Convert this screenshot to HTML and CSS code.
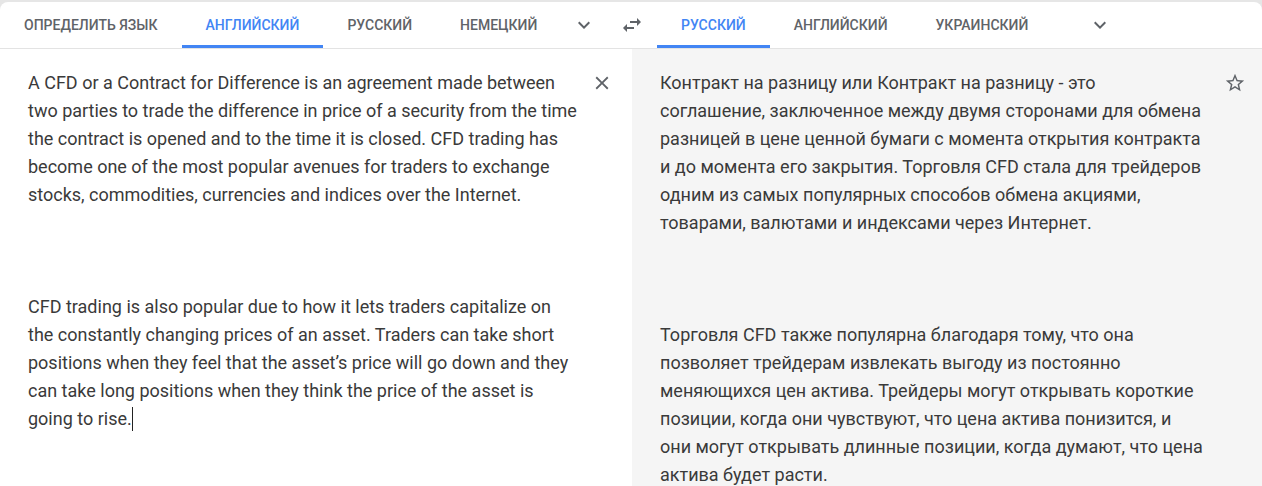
FILE: index.html
```html
<!DOCTYPE html>
<html lang="ru">
<head>
<meta charset="utf-8">
<title>Переводчик</title>
<link rel="stylesheet" href="styles.css">
</head>
<body>
<div class="card">
  <div class="header">
    <div class="side side-src">
      <div class="tab">Определить язык</div>
      <div class="tab active">Английский</div>
      <div class="tab">Русский</div>
      <div class="tab">Немецкий</div>
      <div class="icon-btn"><svg viewBox="0 0 24 24" width="24" height="24"><path d="M16.59 8.59L12 13.17 7.41 8.59 6 10l6 6 6-6z"/></svg></div>
    </div>
    <div class="icon-btn swap"><svg viewBox="0 0 24 24" width="24" height="24"><path d="M6.99 11L3 15l3.99 4v-3H14v-2H6.99v-3zM21 9l-3.99-4v3H10v2h7.01v3L21 9z"/></svg></div>
    <div class="side side-tgt">
      <div class="tab active">Русский</div>
      <div class="tab">Английский</div>
      <div class="tab">Украинский</div>
      <div class="icon-btn more"><svg viewBox="0 0 24 24" width="24" height="24"><path d="M16.59 8.59L12 13.17 7.41 8.59 6 10l6 6 6-6z"/></svg></div>
    </div>
  </div>
  <div class="panels">
    <div class="panel panel-src">
      <div class="text">
        <p>A CFD or a Contract for Difference is an agreement made between<br>two parties to trade the difference in price of a security from the time<br>the contract is opened and to the time it is closed. CFD trading has<br>become one of the most popular avenues for traders to exchange<br>stocks, commodities, currencies and indices over the Internet.</p>
        <p>CFD trading is also popular due to how it lets traders capitalize on<br>the constantly changing prices of an asset. Traders can take short<br>positions when they feel that the asset’s price will go down and they<br>can take long positions when they think the price of the asset is<br>going to rise.<span class="caret"></span></p>
      </div>
      <div class="icon-btn small"><svg viewBox="0 0 24 24" width="22" height="22"><path d="M19 6.41L17.59 5 12 10.59 6.41 5 5 6.41 10.59 12 5 17.59 6.41 19 12 13.41 17.59 19 19 17.59 13.41 12z"/></svg></div>
    </div>
    <div class="panel panel-tgt">
      <div class="text">
        <p>Контракт на разницу или Контракт на разницу - это<br>соглашение, заключенное между двумя сторонами для обмена<br>разницей в цене ценной бумаги с момента открытия контракта<br>и до момента его закрытия. Торговля CFD стала для трейдеров<br>одним из самых популярных способов обмена акциями,<br>товарами, валютами и индексами через Интернет.</p>
        <p>Торговля CFD также популярна благодаря тому, что она<br>позволяет трейдерам извлекать выгоду из постоянно<br>меняющихся цен актива. Трейдеры могут открывать короткие<br>позиции, когда они чувствуют, что цена актива понизится, и<br>они могут открывать длинные позиции, когда думают, что цена<br>актива будет расти.</p>
      </div>
      <div class="icon-btn small"><svg viewBox="0 0 24 24" width="22" height="22"><path d="M22 9.24l-7.19-.62L12 2 9.19 8.63 2 9.24l5.46 4.73L5.82 21 12 17.27 18.18 21l-1.63-7.03L22 9.24zM12 15.4l-3.76 2.27 1-4.28-3.32-2.88 4.38-.38L12 6.1l1.71 4.04 4.38.38-3.32 2.88 1 4.28L12 15.4z"/></svg></div>
    </div>
  </div>
</div>
</body>
</html>
```
FILE: styles.css
```css
html, body {
  margin: 0;
  padding: 0;
}
body {
  background: #e6e6e6;
  font-family: Roboto, "Noto Sans", Arial, sans-serif;
  height: 486px;
  overflow: hidden;
}
.card {
  margin-top: 2px;
  background: #fff;
  border-radius: 8px 8px 0 0;
  overflow: hidden;
  height: 484px;
  display: flex;
  flex-direction: column;
}
.header {
  height: 46px;
  flex: 0 0 46px;
  border-bottom: 1px solid #e3e3e3;
  display: flex;
  align-items: stretch;
}
.side {
  display: flex;
  align-items: stretch;
}
.side-src {
  width: 608px;
}
.tab {
  padding: 0 24px;
  display: flex;
  align-items: center;
  font-size: 14px;
  font-weight: 500;
  text-transform: uppercase;
  color: #5f6368;
  border-bottom: 3px solid transparent;
  padding-top: 3px;
  white-space: nowrap;
}
.tab.active {
  color: #4285f4;
  border-bottom-color: #4285f4;
}
.icon-btn {
  width: 48px;
  display: flex;
  align-items: center;
  justify-content: center;
  fill: #5f6368;
}
.side-src .icon-btn {
  margin-left: auto;
  margin-right: 2px;
}
.swap {
  width: 48px;
  margin-right: 1px;
}
.more {
  margin-left: 24px;
}
.panels {
  flex: 1;
  display: grid;
  grid-template-columns: 632px 1fr;
}
.panel {
  display: flex;
  align-items: flex-start;
}
.panel-src {
  padding: 20px 18px 0 28px;
  gap: 6px;
}
.panel-tgt {
  background: #f5f5f5;
  padding: 20px 15px 0 28px;
  gap: 18px;
}
.text {
  flex: 1;
  font-size: 18px;
  line-height: 28px;
  color: #3a3a3a;
}
.text p {
  margin: 0;
  white-space: nowrap;
}
.text p + p {
  margin-top: 84px;
}
.icon-btn.small {
  width: 24px;
  height: 28px;
}
.caret {
  display: inline-block;
  width: 1px;
  height: 24px;
  background: #222;
  vertical-align: -6px;
}
```
